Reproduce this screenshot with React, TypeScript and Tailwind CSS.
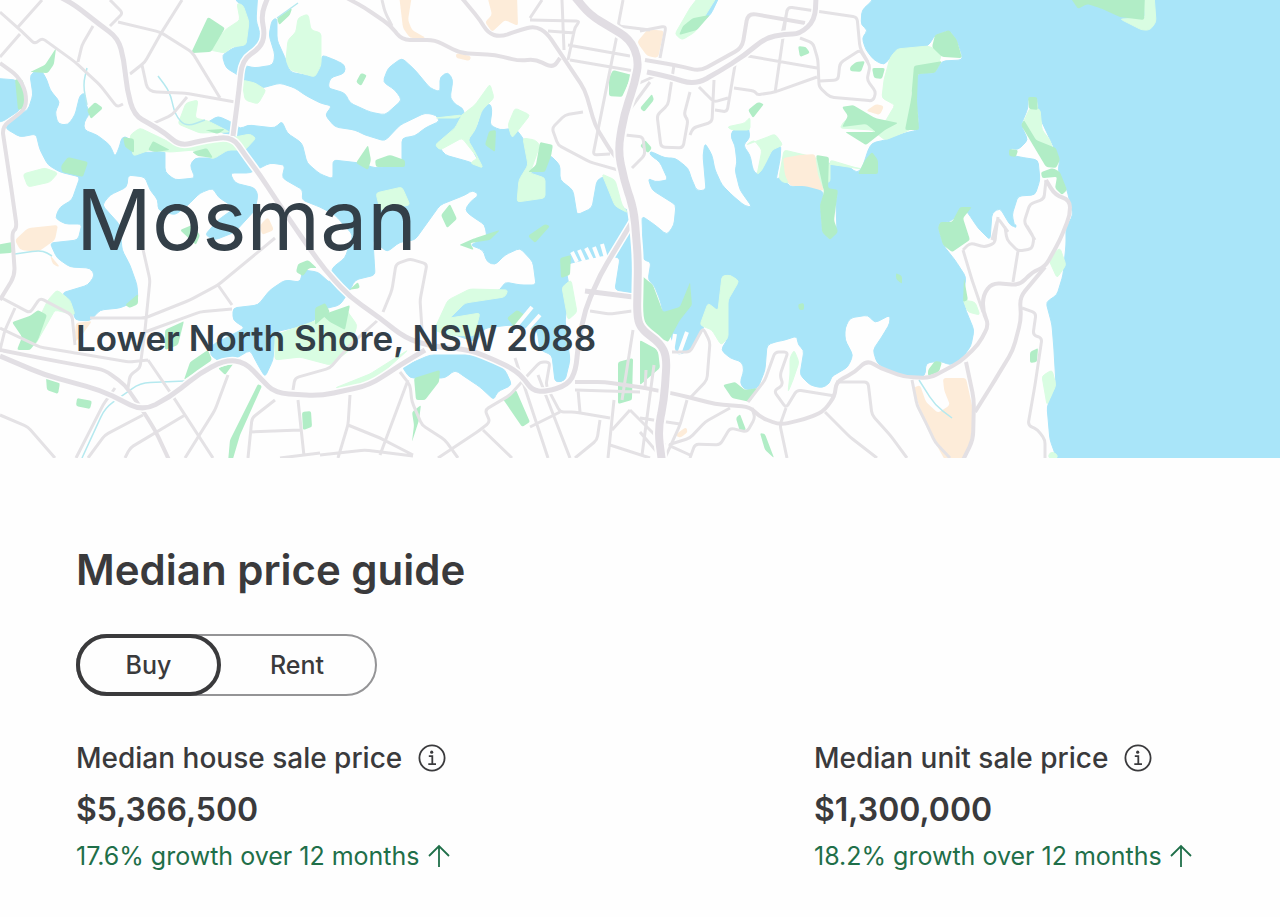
import { useState } from 'react'

type Mode = 'buy' | 'rent'

type Stat = { label: string; price: string; growth: string }

const MODES: { id: Mode; label: string }[] = [
  { id: 'buy', label: 'Buy' },
  { id: 'rent', label: 'Rent' },
]

const STATS: Stat[] = [
  {
    label: 'Median house sale price',
    price: '$5,366,500',
    growth: '17.6% growth over 12 months',
  },
  {
    label: 'Median unit sale price',
    price: '$1,300,000',
    growth: '18.2% growth over 12 months',
  },
]

const WATER = [
  // ocean and the harbour east of the bridge
  'M873 0L862 10 861 25 868 30 862 38 866 50 874 60 884 65 890 58 897 49 905 50 928 46 932 40 935 35 949 30 957 40 962 55 962 60 942 61 935 73 918 74 915 80 915 100 919 118 918 130 905 133 885 140 872 143 868 150 865 160 862 168 857 173 848 166 829 162 829 180 824 188 838 190 836 205 837 230 830 240 822 232 820 205 824 192 815 188 805 184 790 187 782 176 776 180 780 160 781 145 772 150 765 165 757 175 753 170 750 155 743 145 750 138 748 125 745 130 732 130 731 138 735 145 737 163 735 170 740 190 752 207 745 206 733 196 722 185 715 170 712 155 705 143 703 155 706 190 697 191 692 180 688 168 675 158 665 158 650 151 650 155 660 162 668 180 655 182 648 178 652 190 676 205 674 225 667 235 655 225 642 216 643 260 651 262 648 280 654 285 660 300 663 312 672 340 678 355 690 350 703 330 708 303 718 311 722 276 730 275 739 281 728 300 728 338 721 350 730 358 742 362 744 370 740 383 745 390 758 388 765 370 767 345 775 342 785 340 797 336 798 345 804 350 800 375 810 385 822 388 830 383 831 377 848 367 853 355 845 340 845 328 850 318 868 315 875 323 890 315 890 323 883 335 873 350 877 363 890 372 910 377 925 376 926 363 940 361 950 365 960 361 971 346 974 330 965 308 964 290 966 277 955 260 943 245 938 228 940 222 950 222 957 215 963 208 968 213 978 228 990 240 992 213 1000 208 1010 225 1015 227 1012 215 1018 196 1035 195 1040 180 1038 160 1020 157 1010 155 1010 148 1018 150 1028 140 1021 125 1028 108 1028 97 1037 97 1040 118 1048 135 1060 160 1058 170 1067 190 1073 215 1066 228 1066 245 1063 275 1057 295 1046 302 1052 325 1054 350 1056 385 1047 407 1050 440 1058 462 1290 470 1290 -10 873 -10Z',
  'M-9 78L17 80 22 95 20 110 2 122 -9 122Z',
  // western harbour, north shore first and then back along the south shore
  'M5 128L15 116 28 110 33 95 30 75 40 68 47 80 50 90 60 102 55 112 58 124 68 125 75 115 80 95 85 93 86 105 90 113 84 122 84 130 97 135 110 145 115 157 119 148 122 137 128 137 133 153 155 152 165 150 165 172 175 180 195 178 190 165 195 158 213 158 230 147 233 140 220 131 205 124 218 116 233 123 240 129 248 125 275 128 282 121 287 133 302 143 307 163 320 174 333 179 333 160 360 163 375 168 402 165 402 138 415 136 425 128 440 121 436 115 425 113 400 125 385 141 365 135 355 130 335 127 325 115 332 106 320 103 305 95 295 88 280 83 262 88 245 83 238 75 226 68 222 55 235 47 245 45 247 25 245 8 235 0 235 -9 258 -9 256 20 262 40 258 47 242 60 242 65 255 68 273 65 275 55 269 35 272 20 277 18 277 40 286 60 290 72 315 77 322 60 322 55 335 60 345 65 345 73 330 78 328 88 345 93 350 103 370 112 385 115 402 100 395 90 383 82 388 68 402 58 415 70 430 88 440 92 440 77 448 72 453 80 450 98 456 105 463 108 465 118 455 130 438 145 445 155 470 162 483 168 475 155 468 140 478 125 482 110 490 103 492 110 490 125 500 130 515 128 523 138 532 160 525 170 517 198 545 198 540 188 530 180 530 172 545 170 550 155 560 165 560 180 573 190 577 215 592 208 597 180 605 176 615 190 622 208 634 212 635 224 635 293 615 290 620 258 605 255 575 262 565 265 570 290 565 320 570 360 565 381 555 382 552 355 540 350 537 330 510 325 485 328 476 342 440 330 448 315 465 302 480 298 500 290 505 282 520 285 536 285 533 262 520 248 505 255 495 265 487 262 483 250 470 245 487 238 485 225 470 215 465 210 470 202 479 195 473 190 465 195 440 205 415 240 400 242 387 252 373 240 375 275 355 280 350 290 340 305 320 310 318 318 305 325 275 332 273 360 265 377 258 365 250 350 225 365 210 355 212 345 245 328 233 320 233 308 258 305 270 290 285 280 300 282 303 270 318 272 330 283 332 268 345 258 353 235 335 215 320 207 302 200 303 190 282 178 285 165 270 163 250 173 230 173 235 183 255 188 258 195 255 210 235 232 215 240 205 235 218 220 235 208 218 197 213 188 200 193 188 205 175 215 158 210 158 200 150 190 145 177 128 175 127 187 110 195 102 205 120 225 122 250 130 265 137 285 138 300 120 308 100 310 90 321 75 320 72 305 62 293 88 285 95 275 90 268 70 267 57 258 50 243 78 240 82 224 65 224 55 218 60 207 72 200 80 177 60 172 48 165 40 150 36 134 20 137Z',
  'M402 367L430 355 470 355 495 362 505 370 512 385 497 392 494 400 480 387 465 377 455 370 445 378 425 378 410 378Z',
  'M700 18L707 0 707 -9 722 -9 711 14 701 23Z',
  'M1013 226L1016 224 1016 228Z',
]

const LIGHT_PARK = [
  'M210 50L225 30 240 20 237 3 243 5 249 22 246 45 232 47 225 53Z',
  'M288 40L296 32 298 18 308 14 311 30 321 33 321 65 315 77 290 70 286 60Z',
  'M242 80L255 83 266 90 258 104 245 100Z',
  'M186 103L198 100 195 118 208 121 230 132 200 133 178 124Z',
  'M130 135L140 128 165 140 180 148 230 138 250 134 256 138 245 150 228 150 213 159 195 150 170 152 150 150 133 156Z',
  'M23 174L45 168 58 173 50 182 28 187Z',
  'M435 118L458 118 475 105 490 84 494 98 482 110 475 130 468 140 475 152 483 168 470 163 478 158 462 138 440 150 435 145 455 128 462 115Z',
  'M508 125L515 108 530 115 520 128 512 138Z',
  'M523 138L535 140 540 145 530 173 545 178 545 198 517 202 519 180 528 165Z',
  'M376 193L402 187 410 205 380 210Z',
  'M602 174L615 180 622 205 628 213 615 206Z',
  'M434 330L448 300 470 289 508 290 505 297 465 303 450 318 480 313 474 336 448 335Z',
  'M562 287L571 280 577 312 568 320Z',
  'M48 300L57 290 70 300 75 315 55 310 35 345 25 347Z',
  'M275 335L318 320 345 308 357 325 350 350 330 365 300 357 275 360Z',
  'M335 388L370 374 408 350 372 382Z',
  'M675 34L690 8 700 -5 718 -5 695 32 682 40Z',
  'M727 127L745 123 750 117 750 130 732 130Z',
  'M746 145L765 138 775 134 783 145 772 150 762 170 757 175 762 150 754 140Z',
  'M779 178L784 150 805 155 829 162 827 188 805 185 782 182Z',
  'M828 164L862 169 853 167 830 160 830 182 827 182Z',
  'M890 58L897 49 928 46 942 52 938 66 918 72 910 95 918 115 910 130 885 140 872 130 840 128 845 120 885 122 895 105 882 98 884 80Z',
  'M1022 125L1030 108 1040 109 1042 130 1050 140 1053 150 1045 150 1035 143Z',
  'M1120 19L1145 18 1144 -6 1154 -6 1156 22 1150 30 1142 30Z',
  'M700 325L708 303 718 311 722 276 730 275 739 281 728 300 728 338 721 345 712 330Z',
  'M1048 258L1060 248 1066 265 1057 278Z',
  'M1042 376L1052 370 1056 385 1047 405Z',
  'M963 300L975 302 980 315 968 312Z',
  'M790 358L794 350 799 362 793 380 788 392 790 375Z',
  'M1050 452L1056 453 1058 458 1048 458Z',
]

const PARK = [
  'M191 53L208 17 225 28 211 52Z',
  'M30 72L45 65 56 48 54 64 48 73Z',
  'M15 79L23 80 26 108 18 110Z',
  'M87 110L95 102 103 108 91 119Z',
  'M277 18L292 8 290 15 279 25Z',
  'M61 166L68 157 88 162 83 177 62 172Z',
  'M123 137L134 139 134 153 125 147Z',
  'M148 150L153 141 170 150 155 152Z',
  'M192 152L207 148 213 158 198 156Z',
  'M205 130L225 129 218 134Z',
  'M180 230L192 225 200 235 196 245Z',
  'M356 82L361 73 367 75 361 86Z',
  'M356 163L368 145 371 160 368 170Z M375 160L390 155 405 160 405 167 376 167Z',
  'M485 145L489 131 496 130 495 152Z',
  'M540 142L553 145 551 156 545 172 528 172 536 165Z',
  'M441 215L450 204 457 219 447 228Z',
  'M528 236L545 224 550 226 535 243Z',
  'M459 245L475 238 500 230 490 240 470 243 474 250Z',
  'M560 258L571 255 570 275 561 278Z',
  'M609 78L613 70 632 75 622 97 609 96Z',
  'M640 108L652 94 654 100 644 112Z',
  'M679 35L683 26 693 18 710 15 697 30Z',
  'M798 46L806 47 810 53 800 57Z',
  'M850 67L856 62 865 61 861 72 850 71Z',
  'M872 68L885 68 882 79 874 78Z',
  'M748 110L758 102 764 104 753 118Z',
  'M640 146L645 140 652 148 648 153Z',
  'M932 47L935 35 949 30 957 40 962 58 942 57Z',
  'M914 66L942 61 935 73 918 74 917 100 919 130 905 130 911 100Z',
  'M842 107L853 105 875 118 898 123 885 130 866 145 845 132 876 132 866 124 842 127 848 116Z',
  'M816 155L829 157 828 188 838 190 836 205 834 220 838 232 830 240 822 232 820 205 824 192Z',
  'M865 160L872 152 878 160 878 174 858 174Z',
  'M938 228L940 222 952 222 960 207 972 207 963 218 970 240 952 252 943 245Z',
  'M1028 97L1037 97 1038 110 1029 109Z M1021 125L1024 120 1036 140 1056 148 1060 160 1056 168 1046 167Z',
  'M1009 149L1018 150 1016 157 1009 156Z M1041 172L1053 168 1060 172 1067 190 1062 195 1055 188 1057 177 1042 178Z',
  'M1068 -6L1145 -6 1144 20 1120 17 1100 8 1087 4 1078 9Z',
  'M641 275L653 285 663 312 680 307 690 282 692 305 680 320 668 342 643 330Z',
  'M640 340L658 350 660 368 640 385Z',
  'M723 385L735 382 745 390 758 388 750 402 732 398Z',
  'M736 418L740 414 746 430 740 432Z M760 433L765 434 774 458 765 450Z',
  'M928 370L935 361 942 362 939 372 928 376Z',
  'M1030 352L1038 348 1037 362 1030 363Z',
  'M896 273L902 276 902 284 896 279Z M798 304L804 303 804 310 799 310Z',
  'M964 278L968 300 963 302Z',
  'M-5 245L13 242 12 253 -5 254Z',
  'M12 322L30 316 38 310 47 315 38 340 30 350 17 350 22 337Z',
  'M46 378L60 383 58 394 47 390Z M77 398L92 401 90 409 76 406Z',
  'M125 305L138 294 138 304 130 308Z',
  'M165 330L184 321 178 345 165 350Z',
  'M184 380L190 362 208 350 212 360 195 372Z',
  'M218 368L234 363 225 375Z',
  'M258 384L262 386 240 435 232 462 228 462 230 440Z',
  'M302 412L311 411 312 427 303 430Z',
  'M296 272L298 264 308 260 317 268 309 268 303 276Z M315 308L325 303 330 312 315 325Z',
  'M322 315L350 305 345 330 330 322Z M349 290L358 282 360 288Z',
  'M414 378L440 370 439 382 425 400 416 400Z M412 412L421 405 419 420 412 442 414 425Z',
  'M503 399L516 390 530 422 522 427Z',
  'M507 318L517 310 525 315 515 328Z',
  'M618 362L633 358 632 400 618 404Z',
]

const INDUSTRY = [
  'M399 -5L412 -5 408 20 412 30 426 38 410 38 403 28Z',
  'M487 -5L517 -5 518 26 505 20 492 32 485 22 492 15Z',
  'M456 53L471 56 470 61 456 58Z',
  'M637 42L648 29 664 31 658 58 647 56Z',
  'M783 158L800 155 815 154 818 175 824 191 805 186 790 186 785 175Z',
  'M866 111L876 104 884 106 880 115Z',
  'M15 240L28 228 58 225 55 240 38 252 20 250Z M50 255L60 267 53 265Z',
  'M260 225L268 217 274 230 262 235Z',
  'M76 323L92 321 82 335 74 343Z',
  'M943 378L966 378 973 410 972 440 962 462 946 462 927 428 913 388 920 385 926 402 938 413 950 405 944 390Z',
  'M675 435L686 427 688 432 680 438Z',
]

const MAJOR = [
  'M60 -3L75 5 100 25 118 38 124 60 127 90 134 115 150 124 165 133 180 146 200 141 232 136 245 155 260 175 275 198 300 235 325 270 350 297 380 318 405 338 430 346 470 350 495 360 515 370 525 380 532 390 545 392 568 385 576 370 578 345 585 310 600 275 632 222',
  'M268 -3L261 15 265 35 260 48 242 60 239 90 233 136',
  'M0 356L45 375 100 390 143 411 170 397 200 373 225 360 245 362 262 380 275 393 320 396 370 385 400 365 425 350',
  'M647 72L670 77 695 85 720 71 745 55 765 38 785 34 800 34 815 20 816 -3',
]

const MEDIUM = [
  'M0 350L50 360 105 370 125 385 143 411 155 430 170 462',
  'M345 -3L365 8 390 25 402 40 435 40 460 53 495 55 520 61 535 59 553 68 560 58',
  'M461 -3L480 20 488 33 500 37 520 30 535 26 547 33 565 60 585 90 595 125 610 150 618 160',
  'M645 60L675 65 700 71 742 48 748 13 805 23',
  'M0 63L18 76 26 92 26 108 15 117 2 127 10 180 17 228 12 232 15 275 0 300',
  'M1046 180L1055 195 1070 200 1070 215 1060 240 1045 267 1032 272 1020 285 992 283 983 295 983 312 989 325 978 345 960 362 930 378 905 377 880 368 867 360 855 372 836 382 835 396 823 412 805 419 780 425 760 417 750 407 715 404 680 395 645 388 605 382 575 382',
  'M1045 267L1020 297 1021 320 1013 350 995 380 975 412',
  'M966 362L974 400 973 440 962 462',
]

const MINOR = [
  'M0 12L18 28 35 44 42 38 75 62 100 85 117 107 123 104 M42 0L18 27 M20 34L0 57 M93 26L82 45 78 62',
  'M110 0L123 13 110 26 M118 22L160 32 192 52 220 98 M182 0L160 35 145 62 130 74 M142 65L147 88 153 92 185 93 235 102 M187 97L172 115 152 124',
  'M382 0L385 12 392 26 M530 20L580 21 575 27 568 60 M530 18L542 0 M562 0L564 50 M548 31L575 33 M568 45L630 56 M570 60L640 72 M617 35L598 130 593 155 610 154 M623 0L618 26 650 30 M583 112L565 115 552 128 558 145 590 162 618 170',
  'M782 34L788 7 857 17 860 48 868 62 M787 10L775 93 M800 38L813 43 818 60 819 87 830 97 873 101 876 92 867 80 870 66 860 50 840 63 838 80 820 81 M748 56L817 68 M734 88L755 91 757 95 775 92 817 77',
  'M735 65L727 112 715 110 M699 87L714 102 728 98 M714 80L712 122 693 128 690 135 M674 65L668 105 657 115 661 147 683 148 688 120 684 115 690 92 M635 85L655 76 M640 31L666 26 660 58 M628 112L650 82 M625 135L643 137 645 155 632 168',
  'M1046 180L1044 199 1030 204 1024 222 1035 240 M963 250L970 243 985 247 995 243 996 228 M963 250L972 280 983 312 M1005 227L1007 240 1018 251 1032 249 1034 238 1027 226 M1018 251L1013 282 M998 217L995 240 M992 240L998 218 1008 232',
  'M1022 308L1036 313 1033 335 1042 338 1035 385 1028 425 1038 430 1045 440 1045 458 M912 380L917 405 927 425 935 442 950 458 M836 382L868 382 872 415 890 435 907 458 M825 412L850 437 877 458',
  'M672 352L690 352 703 328 710 342 707 380 690 398 M748 402L765 380 775 352 788 352 780 375 783 385 774 391 786 408 797 390 835 396 M786 408L780 425 787 458 M752 408L755 418 747 432 730 428 720 445 695 444 690 458 M730 408L705 422 690 438 668 445 690 455 M654 365L642 455 M687 400L680 425 665 458 M640 418L680 424 M640 432L662 458',
  'M0 297L30 313 40 298 72 315 75 345 M15 308L5 330 0 350 M0 328L40 347 75 353 130 362 148 360 M142 245L150 280 145 330 140 368 130 375 128 388 M148 360L172 395 213 458 M90 318L145 318 190 300 218 285 275 238 M145 332L200 312 232 309 M218 285L232 305',
  'M0 415L28 427 55 458 M115 388L103 405 76 458 M143 415L105 435 88 458 M185 415L130 448 125 458 M228 375L215 410 185 458 M275 400L252 418 248 458 M250 432L300 430 M298 400L304 456 M293 390L295 378 330 368 350 345 378 320 M280 458L320 453',
  'M383 312L392 290 396 264 410 259 427 264 420 300 422 330 M350 395L348 425 338 458 M320 455L365 450 413 456 M348 425L380 438 413 455 M380 455L408 380 M400 372L410 385 412 402 422 425 445 440 458 458',
  'M438 458L480 430 490 422 485 410 510 395 528 375 540 362 550 362 546 385 560 412 575 412 610 418 M483 430L512 458 M515 358L548 458 M538 375L570 458 M560 412L530 427 M590 311L610 314 632 311 M600 420L597 440 575 458 M614 400L608 458 M575 390L640 392 M578 390L580 412 M630 410L612 430 M630 410L665 445 M610 445L650 458 M633 330L622 400 M646 370L645 390',
]

const MOTORWAY =
  'M575 -3L590 15 610 27 630 39 639 60 635 82 624 115 618 150 624 180 634 210 638 260 637 318 642 330 660 343 667 357 664 400 658 430 662 462'

const CREEKS =
  'M87 68L83 85 87 105 M158 76L170 92 175 115 186 127 205 120 M15 254L42 250 52 256 M82 458L105 408 140 383 185 381 M919 380L935 405 952 418 M277 18L298 3'

const PIERS =
  'M513 330L532 307 M524 333L540 315 M577 262L572 252 M584 261L579 250 M592 260L586 248 M599 260L594 247 M606 258L602 244 M672 352L675 334 M679 354L687 332'

/** Rounds every corner of a polyline path, by at most `radius` map units. */
function soften(path: string, radius: number): string {
  return path
    .split('M')
    .filter((s) => s.trim())
    .map((sub) => {
      const closed = sub.includes('Z')
      const n = (sub.match(/-?\d+/g) ?? []).map(Number)
      const pts: [number, number][] = []
      for (let i = 0; i + 1 < n.length; i += 2) pts.push([n[i], n[i + 1]])

      const toward = (a: [number, number], b: [number, number]) => {
        const len = Math.hypot(b[0] - a[0], b[1] - a[1]) || 1
        const t = Math.min(0.5, radius / len)
        return `${(a[0] + (b[0] - a[0]) * t).toFixed(1)} ${(a[1] + (b[1] - a[1]) * t).toFixed(1)}`
      }

      const last = pts.length - 1
      let out = ''
      pts.forEach((p, i) => {
        if (!closed && (i === 0 || i === last)) {
          out += `${i === 0 ? 'M' : 'L'}${p[0]} ${p[1]}`
          return
        }
        const prev = pts[i === 0 ? last : i - 1]
        const next = pts[i === last ? 0 : i + 1]
        out += `${i === 0 ? 'M' : 'L'}${toward(p, prev)}Q${p[0]} ${p[1]} ${toward(p, next)}`
      })
      return closed ? `${out}Z` : out
    })
    .join('')
}

function Shapes({ paths, radius }: { paths: string[]; radius: number }) {
  return paths.map((d) => <path key={d} d={soften(d, radius)} />)
}

function SuburbMap() {
  return (
    <svg
      aria-hidden="true"
      viewBox="0 0 1280 458"
      preserveAspectRatio="xMidYMid slice"
      className="absolute inset-0 h-full w-full"
    >
      <path d="M0 0H1280V458H0Z" fill="#fefefe" />
      <g fill="#a9e5f9" stroke="#a9e5f9">
        <Shapes paths={WATER} radius={4} />
      </g>
      <g fill="#d9fde2" stroke="#d9fde2">
        <Shapes paths={LIGHT_PARK} radius={3} />
      </g>
      <g fill="#b1edc6">
        <Shapes paths={PARK} radius={2} />
      </g>
      <g fill="#fdecd9">
        <Shapes paths={INDUSTRY} radius={3} />
      </g>
      <g fill="none" strokeLinejoin="round">
        <path d={soften(CREEKS, 10)} stroke="#b5e9ef" strokeWidth="1.5" />
        <path d={PIERS} stroke="#fefefe" strokeWidth="4" />
        <g stroke="#e4e2e5" strokeWidth="3">
          <Shapes paths={MINOR} radius={4} />
        </g>
        <g stroke="#e3e0e4" strokeWidth="4">
          <Shapes paths={MEDIUM} radius={8} />
        </g>
        <g stroke="#fefefe" strokeWidth="8">
          <Shapes paths={MAJOR} radius={14} />
        </g>
        <g stroke="#e2dfe4" strokeWidth="5">
          <Shapes paths={MAJOR} radius={14} />
        </g>
        <path d="M585 291L633 297" stroke="#e2dfe4" strokeWidth="5" />
        {/* motorway over the harbour bridge */}
        <path d={soften(MOTORWAY, 14)} stroke="#fefefe" strokeWidth="12" />
        <path d={soften(MOTORWAY, 14)} stroke="#e1dde3" strokeWidth="8" />
      </g>
    </svg>
  )
}

function InfoIcon() {
  return (
    <svg viewBox="0 0 28 28" className="size-7" fill="none" stroke="currentColor">
      <circle cx="14" cy="14" r="12.6" strokeWidth="1.8" />
      <circle cx="13.7" cy="8.2" r="1.6" fill="currentColor" stroke="none" />
      <path d="M10.8 12.2H14.3V20.2M10.3 20.2H18" strokeWidth="1.8" />
    </svg>
  )
}

function ArrowUp() {
  return (
    <svg viewBox="0 0 22 24" className="h-6 w-[22px]" fill="none" stroke="currentColor" strokeWidth="1.8">
      <path d="M11 23V2M1 12L11 2L21 12" />
    </svg>
  )
}

function PriceStat({ label, price, growth }: Stat) {
  return (
    <div>
      <div className="flex items-center gap-4">
        <h3 className="text-[28px] leading-10 font-medium">{label}</h3>
        <button type="button" aria-label={`About ${label.toLowerCase()}`}>
          <InfoIcon />
        </button>
      </div>
      <p className="mt-2 text-[32px] leading-12 font-semibold">{price}</p>
      <p className="mt-1 flex items-center gap-2 text-[25px] leading-9 text-[#1f6f49]">
        {growth}
        <ArrowUp />
      </p>
    </div>
  )
}

export default function App() {
  const [mode, setMode] = useState<Mode>('buy')

  return (
    <main className="min-h-screen bg-[#fefefe] font-['Inter',sans-serif] text-[#3a3a3c]">
      <header className="relative h-[458px] overflow-hidden px-19 pt-[166px] text-[#333f48]">
        <SuburbMap />
        <div className="relative">
          <h1 className="text-[84px] leading-[108px]">Mosman</h1>
          <p className="mt-10 text-[35px] leading-12 font-semibold">Lower North Shore, NSW 2088</p>
        </div>
      </header>

      <section className="px-19 pt-20">
        <h2 className="text-[42px] leading-16 font-semibold">Median price guide</h2>

        <div className="mt-8 inline-flex h-[62px] rounded-full border-2 border-[#949496]">
          {MODES.map((m) => (
            <button
              key={m.id}
              type="button"
              aria-pressed={mode === m.id}
              onClick={() => setMode(m.id)}
              className={
                mode === m.id
                  ? '-m-0.5 w-[145px] rounded-full border-4 border-[#3a3a3c] pt-0.5 text-[25px] font-medium'
                  : 'w-[156px] rounded-full pt-0.5 text-[25px] font-medium'
              }
            >
              {m.label}
            </button>
          ))}
        </div>

        <div className="mt-[42px] grid grid-cols-[738fr_390fr]">
          {STATS.map((s) => (
            <PriceStat key={s.label} {...s} />
          ))}
        </div>
      </section>
    </main>
  )
}
